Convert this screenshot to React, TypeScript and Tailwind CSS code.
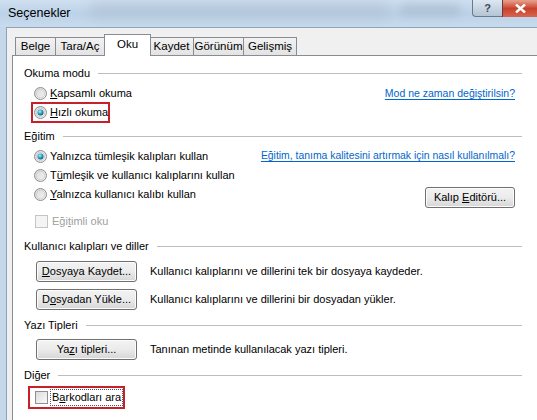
import type { ReactNode } from 'react'

function Radio({ checked }: { checked?: boolean }) {
  return (
    <svg width="13" height="13" viewBox="0 0 13 13" className="shrink-0">
      <defs>
        <linearGradient id="rb" x1="0" y1="0" x2="1" y2="1">
          <stop offset="0" stopColor="#d8d8d8" />
          <stop offset="1" stopColor="#f6f6f6" />
        </linearGradient>
        <radialGradient id="rd" cx="0.4" cy="0.35" r="0.7">
          <stop offset="0" stopColor="#a8f0ff" />
          <stop offset="0.5" stopColor="#2fa7c8" />
          <stop offset="1" stopColor="#0c4f6c" />
        </radialGradient>
      </defs>
      <circle cx="6.5" cy="6.5" r="6" fill="url(#rb)" stroke="#8e8f8f" strokeWidth="1" />
      <circle cx="6.5" cy="6.5" r="4.3" fill="none" stroke="#c9c9c9" strokeWidth="0.8" />
      {checked && <circle cx="6.5" cy="6.5" r="3" fill="url(#rd)" />}
    </svg>
  )
}

function Check({ disabled }: { disabled?: boolean }) {
  return (
    <span
      className={`inline-block w-[13px] h-[13px] shrink-0 border ${
        disabled ? 'border-[#c5c5c5] bg-[#f4f4f4]' : 'border-[#8e8f8f] bg-gradient-to-br from-[#dcdcdc] to-[#fafafa]'
      }`}
    />
  )
}

function Header({ children }: { children: ReactNode }) {
  return (
    <div className="h-[18px] flex items-center gap-[8px]">
      <span>{children}</span>
      <span className="flex-1 h-px bg-[#bdbdbd]" />
    </div>
  )
}

function Btn({ children, w = 'w-[101px]' }: { children: ReactNode; w?: string }) {
  return (
    <div
      className={`${w} h-[21px] shrink-0 flex items-center justify-center rounded-[3px] border border-[#707070] bg-gradient-to-b from-[#f3f3f3] via-[#ebebeb] to-[#d6d6d6] shadow-[inset_0_0_0_1px_#fcfcfc]`}
    >
      {children}
    </div>
  )
}

function Tab({ label, w, active }: { label: string; w: string; active?: boolean }) {
  return active ? (
    <div className={`${w} h-[22px] -mx-[1px] flex justify-center pt-[4px] bg-white border border-b-0 border-[#898c95] relative z-10 -mb-px`}>
      {label}
    </div>
  ) : (
    <div className={`${w} h-[18px] mt-[3px] flex items-center justify-center bg-gradient-to-b from-[#f2f2f2] to-[#e3e3e3] border border-b-0 border-[#898c95] -ml-px first:ml-0`}>
      {label}
    </div>
  )
}

export default function App() {
  return (
    <div className="w-[537px] h-[420px] overflow-hidden flex flex-col bg-[#c5d7ea] font-['Liberation_Sans',Arial,sans-serif] text-[11px] text-black leading-none whitespace-nowrap">
      {/* title bar */}
      <div className="h-[27px] shrink-0 relative flex items-center pl-[8px] bg-gradient-to-b from-[#cfdff0] via-[#bcd2e8] to-[#c8dbee] overflow-hidden">
        <div className="absolute left-[90px] top-[3px] w-[300px] h-[16px] bg-[#aebfd1] blur-[6px] opacity-60" />
        <div className="absolute left-[400px] top-[4px] w-[60px] h-[12px] bg-[#9eb0c2] blur-[5px] opacity-50" />
        <span className="relative text-[12.5px]">Seçenekler</span>
        <div className="absolute right-0 top-0 flex">
          <div className="w-[30px] h-[17px] rounded-bl-[4px] border border-t-0 border-r-0 border-[#6b7a8a] bg-gradient-to-b from-[#dde7f1] to-[#b4c4d4] flex items-center justify-center text-[11px] font-bold text-[#3c4a58]">
            ?
          </div>
          <div className="w-[35px] h-[17px] border-l border-[#6b3a3a] bg-gradient-to-b from-[#e6a290] via-[#c9402c] to-[#d76550] flex items-center justify-center">
            <svg width="11" height="9" viewBox="0 0 11 9">
              <path d="M1 0.5 L10 8.5 M10 0.5 L1 8.5" stroke="#fff" strokeWidth="2.4" />
            </svg>
          </div>
        </div>
      </div>

      {/* body */}
      <div className="flex-1 flex pl-[6px]">
        <div className="flex-1 flex flex-col bg-[#f0f0f0] border-t border-l border-[#8fa3b8] pl-[5px] pt-[6px]">
          {/* tabs */}
          <div className="flex h-[21px] pl-[3px] shrink-0 text-[11.5px]">
            <Tab label="Belge" w="w-[41px]" />
            <Tab label="Tara/Aç" w="w-[50px]" />
            <Tab label="Oku" w="w-[47px]" active />
            <Tab label="Kaydet" w="w-[45px]" />
            <Tab label="Görünüm" w="w-[51px]" />
            <Tab label="Gelişmiş" w="w-[54px]" />
          </div>

          {/* panel */}
          <div className="flex-1 bg-white border-t border-l border-[#898c95] pl-[11px] pr-[15px] pt-[8px]">
            <Header>Okuma modu</Header>
            <div className="mt-[2px] mr-[7px] h-[18px] flex items-center justify-between">
              <div className="flex items-center gap-[3px] ml-[10px]">
                <Radio />
                <span>
                  <u>K</u>apsamlı okuma
                </span>
              </div>
              <a className="text-[10.5px] text-[#0066cc] underline underline-offset-2">Mod ne zaman değiştirilsin?</a>
            </div>
            <div className="ml-[7px] w-[79px] h-[21px] border-2 border-[#c8202a] flex items-center gap-[3px] pl-[1px]">
              <Radio checked />
              <span>
                <u>H</u>ızlı okuma
              </span>
            </div>

            <div className="mt-[4px]">
              <Header>Eğitim</Header>
            </div>
            <div className="mt-[2px] mr-[7px] h-[18px] flex items-center justify-between">
              <div className="flex items-center gap-[3px] ml-[10px]">
                <Radio checked />
                <span>Yalnızca tümleşik kalıpları kullan</span>
              </div>
              <a className="text-[10.4px] text-[#0066cc] underline underline-offset-2">
                Eğitim, tanıma kalitesini artırmak için nasıl kullanılmalı?
              </a>
            </div>
            <div className="mt-[1px] h-[18px] flex items-center gap-[3px] ml-[10px]">
              <Radio />
              <span>
                T<u>ü</u>mleşik ve kullanıcı kalıplarını kullan
              </span>
            </div>
            <div className="mt-[1px] mr-[7px] flex items-start justify-between">
              <div className="h-[18px] flex items-center gap-[3px] ml-[10px]">
                <Radio />
                <span>
                  <u>Y</u>alnızca kullanıcı kalıbı kullan
                </span>
              </div>
              <div className="mt-[2px]">
                <Btn w="w-[90px]">
                  <span>
                    Kalıp <u>E</u>ditörü...
                  </span>
                </Btn>
              </div>
            </div>
            <div className="mt-[4px] h-[18px] flex items-center gap-[4px] ml-[11px] text-[#a0a0a0]">
              <Check disabled />
              <span>
                Eği<u>t</u>imli oku
              </span>
            </div>

            <div className="mt-[7px]">
              <Header>Kullanıcı kalıpları ve diller</Header>
            </div>
            <div className="mt-[6px] flex items-center gap-[13px] ml-[12px]">
              <Btn>
                <span>
                  <u>D</u>osyaya Kaydet...
                </span>
              </Btn>
              <span>Kullanıcı kalıplarını ve dillerini tek bir dosyaya kaydeder.</span>
            </div>
            <div className="mt-[7px] flex items-center gap-[13px] ml-[12px]">
              <Btn>
                <span>
                  D<u>o</u>syadan Yükle...
                </span>
              </Btn>
              <span>Kullanıcı kalıplarını ve dillerini bir dosyadan yükler.</span>
            </div>

            <div className="mt-[6px]">
              <Header>Yazı Tipleri</Header>
            </div>
            <div className="mt-[5px] flex items-center gap-[13px] ml-[12px]">
              <Btn>
                <span>
                  Ya<u>z</u>ı tipleri...
                </span>
              </Btn>
              <span>Tanınan metinde kullanılacak yazı tipleri.</span>
            </div>

            <div className="mt-[6px]">
              <Header>Diğer</Header>
            </div>
            <div className="mt-[2px] ml-[4px] w-[97px] h-[23px] border-2 border-[#c8202a] flex items-center gap-[2px] pl-[5px]">
              <Check />
              <span className="border border-dotted border-[#555] px-px py-[2px]">
                B<u>a</u>rkodları ara
              </span>
            </div>
          </div>
        </div>
      </div>
    </div>
  )
}
